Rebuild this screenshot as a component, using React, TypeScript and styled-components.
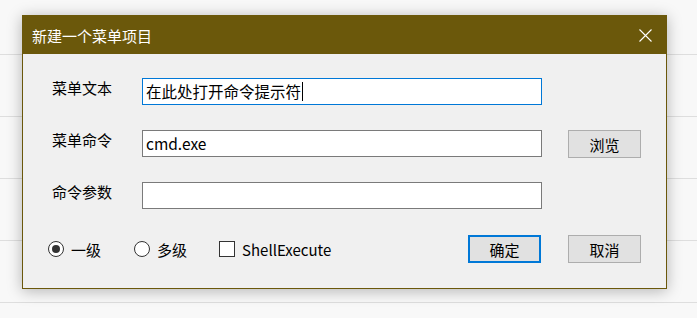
import styled, { createGlobalStyle } from 'styled-components'

const GlobalStyle = createGlobalStyle`
	html, body {
		margin: 0;
		padding: 0;
		background: #f8f8f8;
		font-family: "Noto Sans CJK SC", "Noto Sans", sans-serif;
	}
`

const Page = styled.div`
	position: relative;
	width: 697px;
	height: 318px;
	overflow: hidden;
`

const BackRow = styled.div<{ $h: number }>`
	height: ${(p) => p.$h}px;
	border-bottom: 1px solid #dedede;
`

const Dialog = styled.div`
	position: absolute;
	left: 22px;
	top: 15px;
	width: 645px;
	height: 274px;
	box-sizing: border-box;
	border: 1px solid #6b580b;
	background: #f0f0f0;
	box-shadow: 0 2px 14px rgba(0, 0, 0, 0.28);
	display: flex;
	flex-direction: column;
`

const TitleBar = styled.div`
	height: 38px;
	background: #6b580b;
	color: #fff;
	display: flex;
	align-items: center;
	justify-content: space-between;
	padding: 0 14px 0 9px;
	font-size: 15px;
`

const CloseIcon = styled.svg`
	width: 13px;
	height: 13px;
	display: block;
`

const Body = styled.div`
	display: grid;
	grid-template-columns: 64px 400px 73px;
	grid-template-rows: 27px 27px 27px;
	column-gap: 26px;
	row-gap: 25px;
	padding: 24px 0 0 29px;
`

const Label = styled.div`
	font-size: 15px;
	line-height: 20px;
	color: #000;
`

const Input = styled.div<{ $focus?: boolean }>`
	box-sizing: border-box;
	height: 27px;
	background: #fff;
	border: 1px solid ${(p) => (p.$focus ? '#0078d7' : '#7a7a7a')};
	padding: 0 3px;
	font-size: 15.5px;
	line-height: 25px;
	color: #000;
	display: flex;
	align-items: center;
	white-space: nowrap;
`

const Caret = styled.span`
	display: inline-block;
	width: 1px;
	height: 19px;
	background: #000;
	margin-left: 1px;
`

const Button = styled.div<{ $primary?: boolean }>`
	box-sizing: border-box;
	width: 73px;
	height: 28px;
	background: #e1e1e1;
	border: ${(p) => (p.$primary ? '2px solid #0078d7' : '1px solid #adadad')};
	font-size: 15px;
	color: #000;
	display: flex;
	align-items: center;
	justify-content: center;
`

const Footer = styled.div`
	display: flex;
	align-items: center;
	padding: 26px 25px 0 25px;
`

const Options = styled.div`
	display: flex;
	align-items: center;
	flex: 1;
`

const Option = styled.label<{ $gap: number }>`
	display: flex;
	align-items: center;
	gap: 7px;
	margin-right: ${(p) => p.$gap}px;
	font-size: 15px;
	color: #000;
`

const Radio = styled.span<{ $on?: boolean }>`
	box-sizing: border-box;
	width: 16px;
	height: 16px;
	border-radius: 50%;
	border: 1px solid #333;
	background: #fff;
	display: flex;
	align-items: center;
	justify-content: center;

	&::after {
		content: '';
		width: 8px;
		height: 8px;
		border-radius: 50%;
		background: ${(p) => (p.$on ? '#333' : 'transparent')};
	}
`

const Check = styled.span`
	box-sizing: border-box;
	width: 16px;
	height: 16px;
	border: 1px solid #333;
	background: #fff;
`

const Buttons = styled.div`
	display: flex;
	gap: 27px;
`

const App = () => (
	<>
		<GlobalStyle />
		<Page>
			<BackRow $h={54} />
			<BackRow $h={61} />
			<BackRow $h={61} />
			<BackRow $h={61} />
			<BackRow $h={61} />

			<Dialog>
				<TitleBar>
					<span>新建一个菜单项目</span>
					<CloseIcon viewBox="0 0 13 13">
						<path d="M0.5 0.5 L12.5 12.5 M12.5 0.5 L0.5 12.5" stroke="#fff" strokeWidth="1.1" />
					</CloseIcon>
				</TitleBar>

				<Body>
					<Label>菜单文本</Label>
					<Input $focus>
						在此处打开命令提示符
						<Caret />
					</Input>
					<div />

					<Label>菜单命令</Label>
					<Input>cmd.exe</Input>
					<Button>浏览</Button>

					<Label>命令参数</Label>
					<Input />
					<div />
				</Body>

				<Footer>
					<Options>
						<Option $gap={33}>
							<Radio $on />
							一级
						</Option>
						<Option $gap={32}>
							<Radio />
							多级
						</Option>
						<Option $gap={0}>
							<Check />
							ShellExecute
						</Option>
					</Options>
					<Buttons>
						<Button $primary>确定</Button>
						<Button>取消</Button>
					</Buttons>
				</Footer>
			</Dialog>
		</Page>
	</>
)

export default App
